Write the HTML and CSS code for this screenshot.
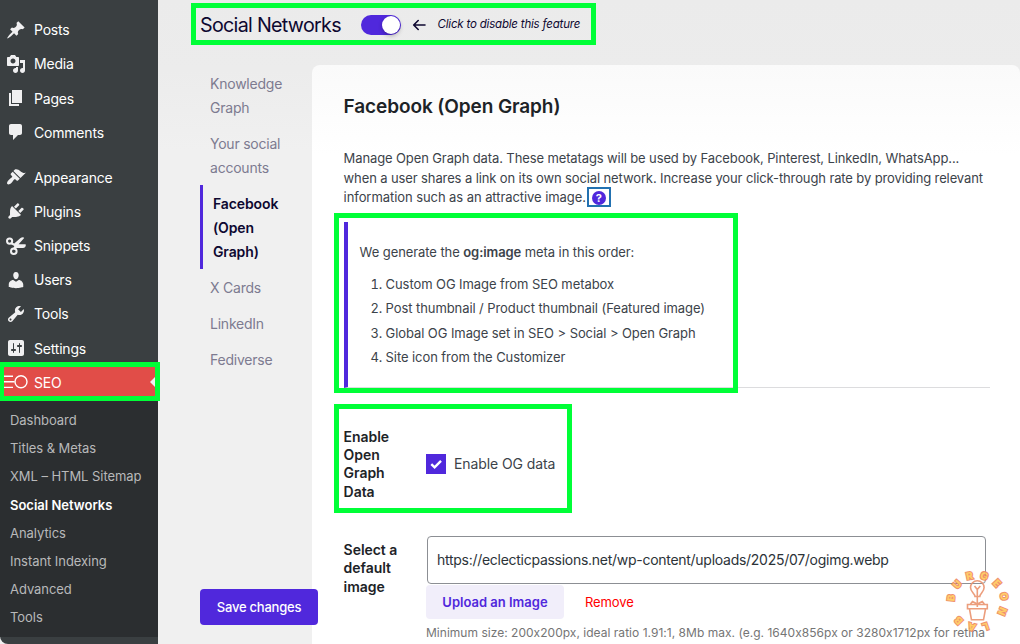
FILE: index.html
```html
<!DOCTYPE html>
<html lang="en">
<head>
<meta charset="utf-8">
<title>Social Networks</title>
<link rel="stylesheet" href="styles.css">
</head>
<body>
<div class="app">
  <aside class="sidebar">
    <nav class="menu">
      <a class="item"><svg viewBox="0 0 20 20"><path d="M10.44 3.02l1.82-1.82 6.36 6.35-1.83 1.82c-1.05-.68-2.48-.57-3.41.36l-.75.75c-.92.93-1.04 2.35-.35 3.41l-1.83 1.82-2.41-2.41-2.8 2.79c-.42.42-3.38 2.71-3.8 2.29s1.86-3.39 2.28-3.81l2.79-2.79L4.1 9.36l1.83-1.82c1.05.69 2.48.57 3.4-.36l.75-.75c.93-.92 1.05-2.35.36-3.41z"/></svg><span>Posts</span></a>
      <a class="item"><svg viewBox="0 0 20 20"><path d="M13 11V4c0-.55-.45-1-1-1h-1.67L9 1H5L3.67 3H2c-.55 0-1 .45-1 1v7c0 .55.45 1 1 1h10c.55 0 1-.45 1-1zM7 4.5c1.38 0 2.5 1.12 2.5 2.5S8.38 9.5 7 9.5 4.5 8.38 4.5 7 5.62 4.5 7 4.5zM14 6h5v10.5c0 1.38-1.12 2.5-2.5 2.5S14 17.88 14 16.5s1.12-2.5 2.5-2.5c.17 0 .34.02.5.05V9h-3V6zm-4 8.05V13h2v3.5c0 1.38-1.12 2.5-2.5 2.5S7 17.88 7 16.5 8.12 14 9.5 14c.17 0 .34.02.5.05z"/></svg><span>Media</span></a>
      <a class="item"><svg viewBox="0 0 20 20"><path d="M6 15V2h10v13H6zm-1 1h8v2H3V5h2v11z"/></svg><span>Pages</span></a>
      <a class="item"><svg viewBox="0 0 20 20"><path d="M5 2h9c1.1 0 2 .9 2 2v7c0 1.1-.9 2-2 2h-2l-5 5v-5H5c-1.1 0-2-.9-2-2V4c0-1.1.9-2 2-2z"/></svg><span>Comments</span></a>
      <a class="item group"><svg viewBox="0 0 20 20"><path d="M14.48 11.06L7.41 3.99l1.5-1.5c.5-.56 2.3-.47 3.51.32 1.21.8 1.43 1.28 2.91 2.1 1.18.64 2.45 1.26 4.45.85zm-.71.71L6.7 4.7 4.93 6.47c-.39.39-.39 1.02 0 1.41l1.06 1.06c.39.39.39 1.03 0 1.42-.6.6-1.43 1.11-2.21 1.69-.35.26-.7.53-1.01.84C1.43 14.23.4 16.08 1.4 17.07c.99 1 2.84-.03 4.18-1.36.31-.31.58-.66.85-1.02.57-.78 1.08-1.61 1.69-2.21.39-.39 1.02-.39 1.41 0l1.06 1.06c.39.39 1.02.39 1.41 0z"/></svg><span>Appearance</span></a>
      <a class="item"><svg viewBox="0 0 20 20"><path d="M13.11 4.36L9.87 7.6 8 5.73l3.24-3.24c.35-.34 1.05-.2 1.56.32.52.51.66 1.21.31 1.55zm-8 1.77l.91-1.12 9.01 9.01-1.19.84c-.71.71-2.63 1.16-3.82 1.16H6.14L4.9 17.26c-.59.59-1.54.59-2.12 0-.59-.58-.59-1.53 0-2.12l1.24-1.24v-3.88c0-1.13.4-3.19 1.09-3.89zm7.26 3.97l3.24-3.24c.34-.35 1.04-.21 1.55.31.52.51.66 1.21.31 1.55l-3.24 3.25z"/></svg><span>Plugins</span></a>
      <a class="item"><svg viewBox="0 0 20 20"><g fill="none" stroke="#f0f0f1" stroke-width="2"><circle cx="3.6" cy="5.1" r="2.6"/><circle cx="7.8" cy="15.2" r="2.8"/></g><path d="M5.2 6l3 1.500 6-5.200c1.600-1.200 3.600-1.300 4-.3L12.600 8.200H19.500c1 1.200-.5 3.800-2.500 3.800H10.500L9.300 14 7 13l1.300-3-3.800-2z"/></svg><span>Snippets</span></a>
      <a class="item"><svg viewBox="0 0 20 20"><path d="M10 9.250c-2.270 0-2.730-3.440-2.730-3.440C7 4.020 7.820 2 9.970 2c2.160 0 2.980 2.020 2.710 3.810 0 0-.41 3.440-2.680 3.440zm0 2.570L12.720 10c2.390 0 4.520 2.330 4.520 4.530v2.490s-3.650 1.130-7.240 1.130c-3.650 0-7.240-1.130-7.240-1.130v-2.490c0-2.250 1.940-4.480 4.470-4.480z"/></svg><span>Users</span></a>
      <a class="item"><svg viewBox="0 0 20 20"><path d="M16.68 9.77c-1.34 1.34-3.3 1.67-4.95.99l-5.41 6.52c-.99.99-2.59.99-3.58 0s-.99-2.59 0-3.57l6.52-5.42c-.68-1.65-.35-3.61.99-4.95 1.28-1.28 3.12-1.62 4.72-1.06l-2.89 2.89 2.82 2.82 2.86-2.87c.53 1.58.18 3.39-1.08 4.65zM3.81 16.21c.4.39 1.04.39 1.43 0 .4-.4.4-1.04 0-1.43-.39-.4-1.03-.4-1.43 0-.39.39-.39 1.03 0 1.43z"/></svg><span>Tools</span></a>
      <a class="item"><svg viewBox="0 0 20 20"><path d="M18 16V4c0-1.1-.9-2-2-2H4c-1.1 0-2 .9-2 2v12c0 1.1.9 2 2 2h12c1.1 0 2-.9 2-2zM8 11h1c.55 0 1 .45 1 1s-.45 1-1 1H8v1.5c0 .28-.22.5-.5.5s-.5-.22-.5-.5V13H6c-.55 0-1-.45-1-1s.45-1 1-1h1V5.5c0-.28.22-.5.5-.5s.5.22.5.5V11zm5-2h-1c-.55 0-1-.45-1-1s.45-1 1-1h1V5.5c0-.28.22-.5.5-.5s.5.22.5.5V7h1c.55 0 1 .45 1 1s-.45 1-1 1h-1v5.5c0 .28-.22.5-.5.5s-.5-.22-.5-.5V9z"/></svg><span>Settings</span></a>
      <a class="item current"><svg class="seo-icon" viewBox="0 0 26 20"><g fill="none" stroke="#fff" stroke-width="1.400"><path d="M0 4.200H10M0 9.800H11.500M0 15.400H10"/><circle cx="18" cy="9.800" r="6"/></g></svg><span>SEO</span></a>
    </nav>
    <nav class="submenu">
      <a>Dashboard</a><a>Titles &amp; Metas</a><a>XML – HTML Sitemap</a><a class="active">Social Networks</a><a>Analytics</a><a>Instant Indexing</a><a>Advanced</a><a>Tools</a>
    </nav>
  </aside>
  <main class="main">
    <header class="header">
      <h1>Social Networks</h1>
      <span class="toggle"><i></i></span>
      <svg class="arrow" viewBox="0 0 14 12"><path d="M13 6H2M6.200 1.500L1.700 6l4.500 4.500" fill="none" stroke="#0e0830" stroke-width="1.600" stroke-linecap="round" stroke-linejoin="round"/></svg>
      <em>Click to disable this feature</em>
    </header>
    <div class="body">
      <nav class="tabs">
        <a>Knowledge<br>Graph</a>
        <a>Your social<br>accounts</a>
        <a class="selected">Facebook<br>(Open<br>Graph)</a>
        <a>X Cards</a>
        <a>LinkedIn</a>
        <a>Fediverse</a>
      </nav>
      <section class="card">
        <h2>Facebook (Open Graph)</h2>
        <p class="intro">Manage Open Graph data. These metatags will be used by Facebook, Pinterest, LinkedIn, WhatsApp...<br>when a user shares a link on its own social network. Increase your click-through rate by providing relevant<br><span class="last">information such as an attractive image.</span><span class="help"><b>?</b></span></p>
        <div class="notice">
          <p>We generate the <b>og:image</b> meta in this order:</p>
          <ol>
            <li>Custom OG Image from SEO metabox</li>
            <li>Post thumbnail / Product thumbnail (Featured image)</li>
            <li>Global OG Image set in SEO &gt; Social &gt; Open Graph</li>
            <li>Site icon from the Customizer</li>
          </ol>
        </div>
        <div class="row enable">
          <div class="label">Enable<br>Open<br>Graph<br>Data</div>
          <label class="check"><span class="box"><svg viewBox="0 0 20 20"><path d="M5.300 10.200l3.300 3.200 6.400-6.500" fill="none" stroke="#fff" stroke-width="2.400"/></svg></span><span class="check-text">Enable OG data</span></label>
        </div>
        <div class="row image">
          <div class="label">Select a<br>default<br>image</div>
          <div class="field">
            <div class="input">https://eclecticpassions.net/wp-content/uploads/2025/07/ogimg.webp</div>
            <div class="actions"><a class="upload">Upload an Image</a><a class="remove">Remove</a></div>
            <div class="hint">Minimum size: 200x200px, ideal ratio 1.91:1, 8Mb max. (e.g. 1640x856px or 3280x1712px for retina</div>
          </div>
        </div>
      </section>
    </div>
  </main>
</div>
<button class="save">Save changes</button>
<div class="mark mark-title"></div>
<div class="mark mark-seo"></div>
<div class="mark mark-notice"></div>
<div class="mark mark-enable"></div>
<svg class="watermark" viewBox="-4 -4 78 81">
  <g fill="none" stroke="#eb9470" stroke-width="1.600">
    <path d="M29 29.500c0-3-4.500-4.500-4.500-9a6.800 6.800 0 0 1 13.600 0c0 4.500-4.300 6-4.300 9zM31.300 40V22M28.500 19l2.800 3.500 3-3.500"/>
    <path d="M21.500 37.500h19.800v4.300H21.500zM23.500 42l2 10.800h12l2-10.800M24.500 37l2-2.500 4.800 2.500 5-2.500 2 2.500"/>
  </g>
  <g class="ring">
    <text transform="translate(5 30.700) rotate(-84)" y="3.600">B</text>
    <text transform="translate(11 17.300) rotate(-47)" y="3.600">U</text>
    <text transform="translate(23.500 8.800) rotate(-12)" y="3.600">R</text>
    <text transform="translate(38.300 9) rotate(20)" y="3.600">G</text>
    <text transform="translate(51 16.200) rotate(47)" y="3.600">E</text>
    <text transform="translate(58 29.300) rotate(82)" y="3.600">O</text>
    <text transform="translate(56.400 44.500) rotate(112)" y="3.600">N</text>
    <text transform="translate(39.500 59.600) rotate(161)" y="3.600">L</text>
    <text transform="translate(25.700 60) rotate(196)" y="3.600">A</text>
    <text transform="translate(12.700 53.500) rotate(226)" y="3.600">B</text>
  </g>
</svg>
</body>
</html>
```
FILE: styles.css
```css
* { box-sizing: border-box; }
body { margin: 0; width: 1020px; height: 644px; overflow: hidden; position: relative; background: #f0f0f0; font-family: Inter, "Liberation Sans", sans-serif; font-feature-settings: "calt" 0; color: #3c434a; }
.app { display: flex; height: 644px; overflow: hidden; }
.sidebar { width: 158px; flex: none; background: #3a3f41; border-bottom-left-radius: 8px; overflow: hidden; }
.menu { padding-top: 12.600px; }
.item { display: flex; align-items: center; height: 34.200px; padding-left: 6px; gap: 8px; color: #fff; font-size: 14px; letter-spacing: -0.200px; }
.item svg { width: 20px; height: 20px; fill: #f0f0f1; flex: none; }
.item.group { margin-top: 10.800px; }
.item.current { background: #e14d48; padding-left: 3px; gap: 5px; position: relative; }
.item .seo-icon { width: 26px; }
.item.current::after { content: ""; position: absolute; right: 0; top: 9px; border: 8px solid transparent; border-right-color: #f0f0f0; border-left: 0; }
.submenu { background: #2b2e30; height: 237.400px; padding-top: 6.500px; }
.submenu a { display: flex; align-items: center; height: 28.200px; padding-left: 10px; font-size: 13px; letter-spacing: -0.050px; color: #b8b9ba; }
.submenu .active { color: #fff; font-weight: 600; letter-spacing: 0; }
.main { flex: 1; min-width: 0; display: flex; flex-direction: column; background: linear-gradient(#ebebeb, #ececec 70px, #f0f0f0 150px); }
.header { height: 65px; flex: none; padding: 0 0 16px 42px; display: flex; align-items: center; color: #0e0830; }
h1 { margin: 0; width: 161px; font-size: 19.700px; letter-spacing: -0.700px; font-weight: 400; white-space: nowrap; }
.toggle { width: 40px; height: 20px; border-radius: 10px; background: #5028dc; display: flex; justify-content: flex-end; align-items: center; padding-right: 1px; }
.toggle i { width: 18px; height: 18px; border-radius: 50%; background: #fff; box-shadow: 0 2px 4px rgba(0,0,0,.25); }
.arrow { width: 14px; height: 12px; margin: 0 11.500px 0 11px; }
.header em { font-size: 11.500px; letter-spacing: -0.190px; padding-bottom: 1px; white-space: nowrap; }
.body { display: flex; flex: 1; min-height: 0; }
.tabs { width: 154px; flex: none; padding: 1px 0 0 42px; letter-spacing: -0.230px; }
.tabs a { display: block; padding: 6px 10px; font-size: 14px; line-height: 24px; color: #7d7b90; white-space: nowrap; }
.tabs .selected { border-left: 3px solid #5028dc; margin: -1px 0 1px; padding: 7px 10px 5px; color: #0e0830; font-weight: 600; letter-spacing: -0.120px; }
.card { flex: 1; min-width: 0; padding: 29px 30px 0 31.600px; background: linear-gradient(#fafafa, #fff 90px); border-radius: 8px 8px 0 0; color: #3c434a; }
h2 { margin: 0; font-size: 19px; line-height: 26px; letter-spacing: -0.100px; color: #1d2327; font-weight: 600; }
.intro { margin: 29px 0 0; font-size: 13px; line-height: 19.500px; letter-spacing: -0.115px; white-space: nowrap; }
.last { letter-spacing: -0.070px; }
.help { display: inline-flex; vertical-align: top; width: 24px; height: 20px; margin: -1px 0 0 1px; border: 2px solid #2271b1; align-items: flex-end; justify-content: center; }
.help b { width: 14px; height: 14px; border-radius: 50%; background: #5028dc; color: #fff; font-size: 11px; line-height: 14px; text-align: center; letter-spacing: 0; }
.notice { margin-top: 14px; height: 166px; border-left: 4px solid #5028dc; border-bottom: 1px solid #dcdcde; padding: 19px 0 0 12px; font-size: 13px; letter-spacing: -0.080px; }
.notice p { margin: 0; line-height: 22px; }
.notice b { font-weight: 600; }
.notice ol { margin: 9px 0 0; padding-left: 26px; }
.notice li { line-height: 24.500px; }
.row { display: flex; }
.label { width: 82.400px; flex: none; font-size: 14px; font-weight: 600; line-height: 18.400px; letter-spacing: -0.050px; color: #1d2327; white-space: nowrap; }
.enable { margin-top: 40px; }
.check { display: flex; align-items: center; height: 20px; margin-top: 26px; gap: 8px; font-size: 14px; letter-spacing: -0.100px; }
.check-text { padding-bottom: 0.500px; }
.box { width: 20px; height: 20px; background: #5028dc; }
.box svg { display: block; }
.image { margin-top: 34.600px; }
.image .label { padding-top: 5.200px; }
.field { width: 560.400px; flex: none; white-space: nowrap; }
.input { height: 48px; margin-left: 1px; border: 1px solid #8c8f94; border-radius: 4px; padding: 0 0 0.500px 9px; display: flex; align-items: center; font-size: 14px; letter-spacing: -0.275px; color: #2c3338; background: #fff; }
.actions { display: flex; align-items: center; margin-top: 1px; font-size: 13px; }
.upload { display: flex; align-items: center; justify-content: center; width: 138px; height: 34px; border-radius: 4px; background: #f1eefa; color: #5028dc; font-weight: 600; }
.remove { margin-left: 21px; color: #f00; letter-spacing: -0.100px; }
.hint { margin-top: 5px; font-size: 12px; line-height: 18px; letter-spacing: 0.025px; color: #757575; }
.save { position: absolute; left: 200px; top: 589px; width: 118px; height: 36px; border: 0; border-radius: 4px; background: #5028dc; color: #fff; font: 500 13px Inter, sans-serif; letter-spacing: -0.230px; padding: 0; }
.mark { position: absolute; border: 5px solid #00ff37; }
.mark-title { left: 191px; top: 3px; width: 405px; height: 42px; }
.mark-seo { left: -1px; top: 362px; width: 161px; height: 39px; }
.mark-notice { left: 334px; top: 213px; width: 404px; height: 180px; }
.mark-enable { left: 334px; top: 404px; width: 238px; height: 109px; }
.watermark { position: absolute; left: 942px; top: 563px; width: 78px; height: 81px; opacity: .9; }
.ring text { font: 800 10px Inter, sans-serif; fill: #ffc958; stroke: #ee8560; stroke-width: 2px; paint-order: stroke; text-anchor: middle; }
```
